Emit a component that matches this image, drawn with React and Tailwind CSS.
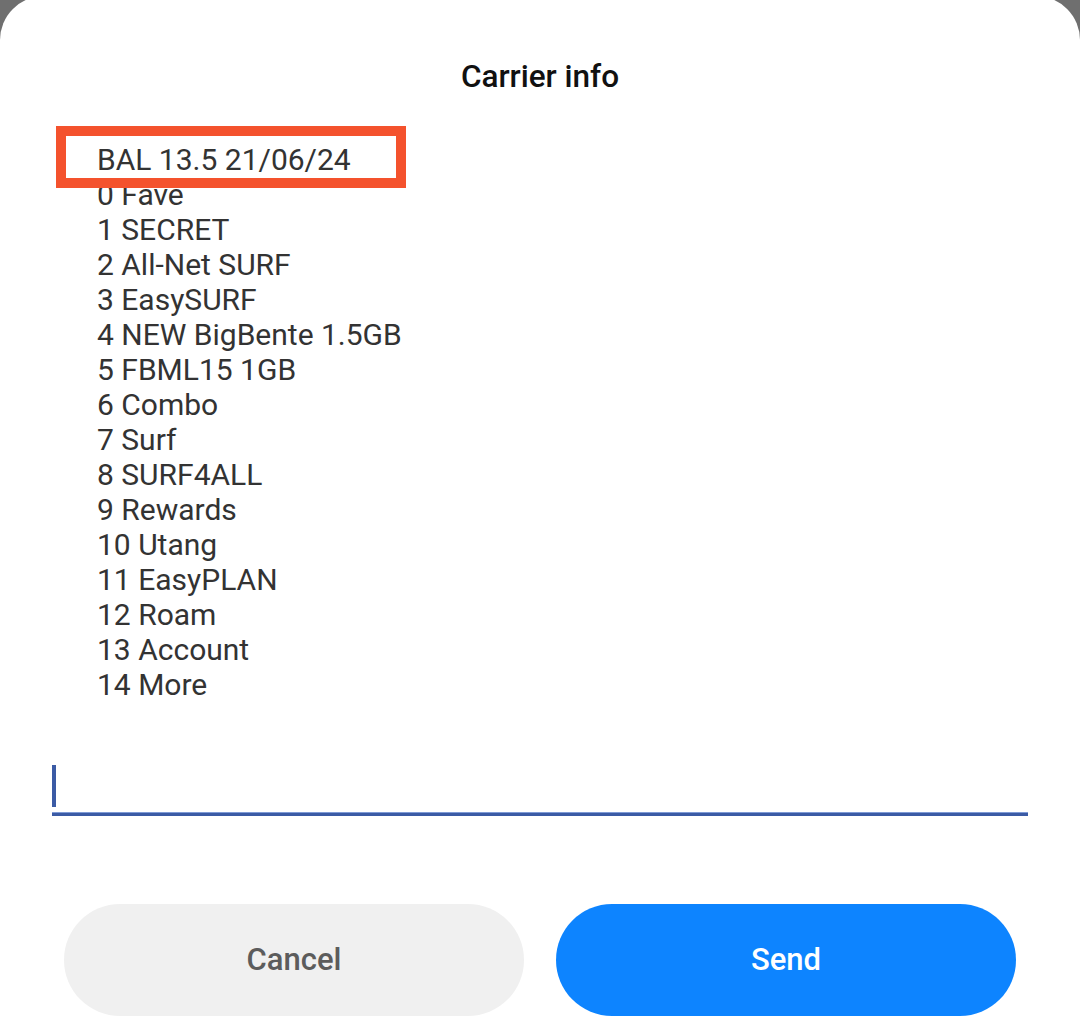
import React from 'react';

const lines = [
  'BAL 13.5 21/06/24',
  '0 Fave',
  '1 SECRET',
  '2 All-Net SURF',
  '3 EasySURF',
  '4 NEW BigBente 1.5GB',
  '5 FBML15 1GB',
  '6 Combo',
  '7 Surf',
  '8 SURF4ALL',
  '9 Rewards',
  '10 Utang',
  '11 EasyPLAN',
  '12 Roam',
  '13 Account',
  '14 More',
];

export default function App() {
  return (
    <div className="w-[1080px] h-[1030px] overflow-hidden bg-[#6f6f6f]" style={{ fontFamily: 'Roboto, "Noto Sans", sans-serif' }}>
      <div className="-mt-1 h-[1034px] bg-white rounded-t-[44px] flex flex-col">
        <h1 className="mt-[61px] h-[40px] leading-[40px] text-center text-[31.5px] font-medium text-[#111111]">Carrier info</h1>

        {/* USSD response */}
        <div className="relative mt-[45px] pl-[97px] text-[30px] leading-[35px] text-[#333333]">
          {lines.map((l) => (
            <div key={l}>{l}</div>
          ))}
          <div className="absolute left-[56px] top-[-16px] w-[350px] h-[62px] border-[10px] border-[#f4522d]"></div>
        </div>

        {/* reply input */}
        <div className="mt-[63px] mx-[52px] flex flex-col">
          <div className="w-[4px] h-[42px] bg-[#3b5ba5]"></div>
          <div className="mt-[5px] h-[4px] bg-[#3b5ba5] border-t border-[#7f9bd6]"></div>
        </div>

        <div className="mt-[88px] mx-[64px] flex gap-[32px]">
          <button className="flex-1 h-[112px] rounded-full bg-[#f0f0f0] text-[#5c5c5c] text-[31px] font-medium">Cancel</button>
          <button className="flex-1 h-[112px] rounded-full bg-[#0d84ff] text-white text-[31px] font-medium">Send</button>
        </div>
      </div>
    </div>
  );
}
